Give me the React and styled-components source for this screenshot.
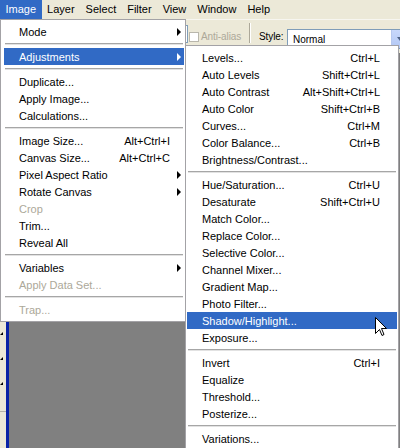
import React from "react";
import styled, { createGlobalStyle } from "styled-components";

const GlobalStyle = createGlobalStyle`
  html, body {
    margin: 0;
    padding: 0;
  }
  body {
    font-family: "Liberation Sans", Arial, sans-serif;
    font-size: 11px;
    color: #000;
  }
`;

const Screen = styled.div`
  position: relative;
  width: 400px;
  height: 448px;
  overflow: hidden;
  background: #ece9d8;
  display: flex;
  flex-direction: column;
`;

const MenuBar = styled.div`
  display: flex;
  flex-shrink: 0;
  height: 19px;
  background: #ece9d8;
`;

const BarItem = styled.div`
  padding: 0 5.5px;
  line-height: 19px;
  background: ${(p) => (p.$active ? "#316ac5" : "transparent")};
  color: ${(p) => (p.$active ? "#fff" : "#000")};
`;

const OptionsBar = styled.div`
  display: flex;
  align-items: center;
  flex-shrink: 0;
  height: 33px;
  padding-left: 150px;
  border-top: 1px solid #f7f6f0;
  background: #ece9d8;
`;

const Field = styled.div`
  align-self: flex-start;
  flex-shrink: 0;
  margin-top: 5px;
  width: 38px;
  height: 18px;
  box-sizing: border-box;
  background: #fff;
  border: 1px solid #7f9db9;
`;

const Check = styled.div`
  flex-shrink: 0;
  width: 10px;
  height: 10px;
  margin-left: 1px;
  box-sizing: border-box;
  background: #fff;
  border: 1px solid #b9b7ac;
`;

const OptLabel = styled.span`
  flex-shrink: 0;
  width: ${(p) => p.$w}px;
  margin-left: ${(p) => p.$gap}px;
  font-size: 10px;
  letter-spacing: -0.1px;
  color: ${(p) => (p.$disabled ? "#aca899" : "#000")};
  white-space: nowrap;
`;

const Divider = styled.div`
  align-self: flex-start;
  flex-shrink: 0;
  margin-top: 3px;
  margin-left: 2px;
  width: 1px;
  height: 20px;
  background: #aca899;
  border-right: 1px solid #fff;
`;

const Select = styled.div`
  align-self: flex-start;
  margin-top: 9px;
  display: flex;
  align-items: center;
  width: 122px;
  height: 20px;
  box-sizing: border-box;
  flex-shrink: 0;
  background: #fff;
  border: 1px solid #7f9db9;
  padding-left: 5px;
  font-size: 10px;
`;

const SelectText = styled.span`
  flex: 1;
`;

const DropButton = styled.div`
  display: flex;
  align-items: center;
  justify-content: center;
  width: 16px;
  height: 100%;
  background: linear-gradient(#c8d8fb, #b2c7f4);
  border-left: 1px solid #b6c8ef;

  &::after {
    content: "";
    border-top: 4px solid #4d6185;
    border-left: 3px solid transparent;
    border-right: 3px solid transparent;
  }
`;

const Workspace = styled.div`
  flex: 1;
  display: flex;
`;

const Toolbox = styled.div`
  width: 6px;
  padding-top: 9px;
  display: flex;
  flex-direction: column;
  background: #ece9d8;
`;

const ToolCell = styled.div`
  position: relative;
  flex-shrink: 0;
  height: 25px;
  box-sizing: border-box;
  border-bottom: ${(p) => (p.$rule ? "1px solid #b5b3a8" : "none")};

  &::after {
    content: "";
    display: ${(p) => (p.$mark ? "block" : "none")};
    position: absolute;
    left: 0;
    bottom: 2px;
    border-bottom: 3px solid #000;
    border-left: 3px solid transparent;
  }
`;

const DocEdge = styled.div`
  width: 3px;
  background: #0a23a6;
`;

const Canvas = styled.div`
  flex: 1;
  background: #808080;
`;

const MenuPanel = styled.div`
  position: absolute;
  z-index: ${(p) => p.$z};
  left: ${(p) => p.$left}px;
  top: ${(p) => p.$top}px;
  width: ${(p) => p.$width}px;
  box-sizing: border-box;
  padding: 3px ${(p) => p.$padR}px 3px ${(p) => p.$padL}px;
  background: #fff;
  border: 1px solid #a3a2a6;
`;

const Item = styled.div`
  display: grid;
  grid-template-columns: 1fr auto ${(p) => p.$gutter}px;
  align-items: center;
  height: 17px;
  padding-left: 15px;
  white-space: nowrap;
  background: ${(p) => (p.$active ? "#316ac5" : "transparent")};
  color: ${(p) =>
    p.$active ? "#fff" : p.$disabled ? "#aca899" : "#000"};
`;

const Keys = styled.span`
  justify-self: end;
`;

const Arrow = styled.span`
  justify-self: end;
  margin-right: 3px;
  width: 0;
  height: 0;
  border-left: 4px solid currentColor;
  border-top: 4px solid transparent;
  border-bottom: 4px solid transparent;
`;

const Sep = styled.div`
  height: 8px;
  box-sizing: border-box;
  padding: 3px 1px 0;

  &::before {
    content: "";
    display: block;
    height: 1px;
    background: #a6a6a6;
    box-shadow: 0 1px 0 #e2e2e2;
  }
`;

const Cursor = styled.svg`
  position: absolute;
  z-index: 5;
  left: 375px;
  top: 317px;
`;

const barItems = ["Image", "Layer", "Select", "Filter", "View", "Window", "Help"];

const imageMenu = [
  { label: "Mode", sub: true },
  "-",
  { label: "Adjustments", sub: true, active: true },
  "-",
  { label: "Duplicate..." },
  { label: "Apply Image..." },
  { label: "Calculations..." },
  "-",
  { label: "Image Size...", keys: "Alt+Ctrl+I" },
  { label: "Canvas Size...", keys: "Alt+Ctrl+C" },
  { label: "Pixel Aspect Ratio", sub: true },
  { label: "Rotate Canvas", sub: true },
  { label: "Crop", disabled: true },
  { label: "Trim..." },
  { label: "Reveal All" },
  "-",
  { label: "Variables", sub: true },
  { label: "Apply Data Set...", disabled: true },
  "-",
  { label: "Trap...", disabled: true },
];

const adjustMenu = [
  { label: "Levels...", keys: "Ctrl+L" },
  { label: "Auto Levels", keys: "Shift+Ctrl+L" },
  { label: "Auto Contrast", keys: "Alt+Shift+Ctrl+L" },
  { label: "Auto Color", keys: "Shift+Ctrl+B" },
  { label: "Curves...", keys: "Ctrl+M" },
  { label: "Color Balance...", keys: "Ctrl+B" },
  { label: "Brightness/Contrast..." },
  "-",
  { label: "Hue/Saturation...", keys: "Ctrl+U" },
  { label: "Desaturate", keys: "Shift+Ctrl+U" },
  { label: "Match Color..." },
  { label: "Replace Color..." },
  { label: "Selective Color..." },
  { label: "Channel Mixer..." },
  { label: "Gradient Map..." },
  { label: "Photo Filter..." },
  { label: "Shadow/Highlight...", active: true },
  { label: "Exposure..." },
  "-",
  { label: "Invert", keys: "Ctrl+I" },
  { label: "Equalize" },
  { label: "Threshold..." },
  { label: "Posterize..." },
  "-",
  { label: "Variations..." },
];

function Menu({ items, gutter, ...panel }) {
  return (
    <MenuPanel {...panel}>
      {items.map((it, i) =>
        it === "-" ? (
          <Sep key={i} />
        ) : (
          <Item
            key={i}
            $gutter={gutter}
            $active={it.active}
            $disabled={it.disabled}
          >
            <span>{it.label}</span>
            <Keys>{it.keys}</Keys>
            {it.sub ? <Arrow /> : <span />}
          </Item>
        )
      )}
    </MenuPanel>
  );
}

export default function App() {
  const tools = Array.from({ length: 18 }, (_, i) => i);

  return (
    <>
      <GlobalStyle />
      <Screen>
        <MenuBar>
          {barItems.map((name) => (
            <BarItem key={name} $active={name === "Image"}>
              {name}
            </BarItem>
          ))}
        </MenuBar>

        <OptionsBar>
          <Field />
          <Check />
          <OptLabel $w={46} $gap={2} $disabled>
            Anti-alias
          </OptLabel>
          <Divider />
          <OptLabel $w={28} $gap={8}>
            Style:
          </OptLabel>
          <Select>
            <SelectText>Normal</SelectText>
            <DropButton />
          </Select>
        </OptionsBar>

        <Workspace>
          <Toolbox>
            {tools.map((t) => (
              <ToolCell key={t} $mark={t >= 10 && t <= 12} $rule={t === 13} />
            ))}
          </Toolbox>
          <DocEdge />
          <Canvas />
        </Workspace>

        <Menu
          items={imageMenu}
          gutter={14}
          $z={2}
          $left={0}
          $top={19}
          $width={186}
          $padL={3}
          $padR={1}
        />
        <Menu
          items={adjustMenu}
          gutter={17}
          $z={3}
          $left={185}
          $top={45}
          $width={214}
          $padL={1}
          $padR={1}
        />

        <Cursor width="12" height="19" viewBox="0 0 12 19">
          <path
            d="M0.5 0.5 V16.5 L4.5 12.5 L7 18.5 L9 17.5 L6.5 11.5 H11.5 Z"
            fill="#fff"
            stroke="#000"
            strokeWidth="1"
            strokeLinejoin="miter"
          />
        </Cursor>
      </Screen>
    </>
  );
}
